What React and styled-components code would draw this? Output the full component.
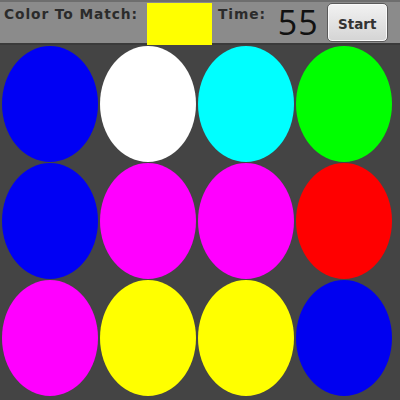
import React from "react"
import styled, { createGlobalStyle } from "styled-components"

const Global = createGlobalStyle`
  html, body {
    margin: 0;
    padding: 0;
    background: #444444;
  }
  body {
    width: 400px;
    height: 400px;
    overflow: hidden;
    font-family: "DejaVu Sans", sans-serif;
  }
`

const Header = styled.div`
  height: 45px;
  box-sizing: border-box;
  background: #8b8b8b;
  border-top: 2px solid #6e6e6e;
  border-bottom: 2px solid #3a3a3a;
  display: flex;
  align-items: flex-start;
  padding-left: 4px;
`

const Label = styled.span`
  font-size: 13.8px;
  font-weight: 700;
  letter-spacing: 0.9px;
  color: #2b2b2b;
  margin-top: 4px;
  margin-right: ${({ gap }) => gap}px;
`

const Swatch = styled.div`
  width: 65px;
  height: 42px;
  margin-top: 1px;
  background: ${({ color }) => color};
  margin-right: 6px;
`

const Timer = styled.span`
  font-family: "Open Sans", "DejaVu Sans", sans-serif;
  font-size: 34px;
  line-height: 40px;
  color: #111;
  margin-right: 8px;
  letter-spacing: 1px;
`

const StartButton = styled.button`
  width: 61px;
  height: 39px;
  margin-top: 1px;
  border: 1px solid #5a5a5a;
  border-radius: 5px;
  background: linear-gradient(#f2f2f2, #d4d4d4);
  box-shadow: inset 0 0 0 1px #fafafa;
  font-family: "DejaVu Sans", sans-serif;
  font-weight: 700;
  font-size: 13.5px;
  color: #333;
  padding: 2px 0 0;
`

const Grid = styled.div`
  display: grid;
  grid-template-columns: repeat(4, 96px);
  grid-auto-rows: 116px;
  column-gap: 2px;
  row-gap: 1px;
  padding: 1px 0 0 2px;
`

const Ball = styled.div`
  border-radius: 50%;
  background: ${({ color }) => color};
`

const balls = [
  "#0000f4", "#ffffff", "#00ffff", "#00ff00",
  "#0000f4", "#ff00ff", "#ff00ff", "#ff0000",
  "#ff00ff", "#ffff00", "#ffff00", "#0000f0",
]

export default function App() {
  return (
    <>
      <Global />
      <Header>
        <Label gap={9}>Color To Match:</Label>
        <Swatch color="#ffff00" />
        <Label gap={12}>Time:</Label>
        <Timer>55</Timer>
        <StartButton>Start</StartButton>
      </Header>
      <Grid>
        {balls.map((c, i) => (
          <Ball key={i} color={c} />
        ))}
      </Grid>
    </>
  )
}
